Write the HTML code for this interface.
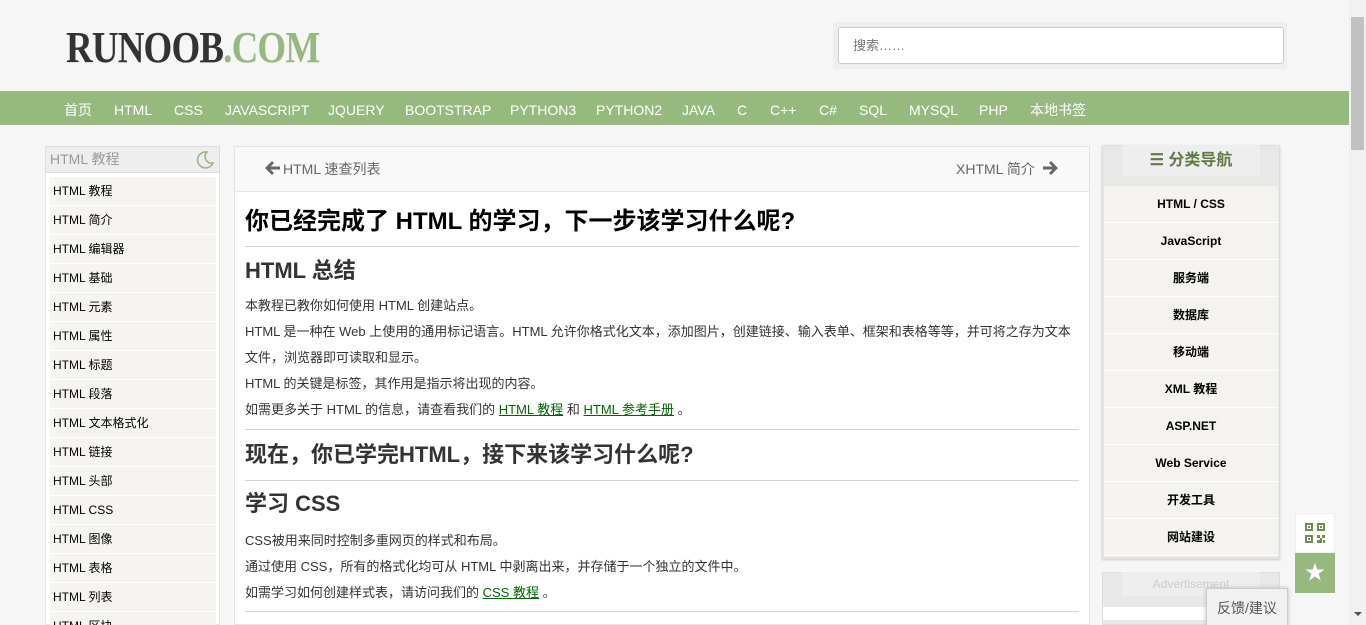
<!DOCTYPE html>
<html style="overflow:hidden;height:625px"><head><meta charset="utf-8"><style>
*{margin:0;padding:0;box-sizing:border-box}
body{width:1366px;height:625px;overflow:hidden;background:#f6f6f6;font-family:"Liberation Sans","Noto Sans CJK SC",sans-serif;position:relative;color:#333}
.a{position:absolute;white-space:nowrap}
.nav span{position:absolute;top:2px;line-height:34px;color:#fff;font-size:14px}
.li{position:absolute;left:50px;width:166px;height:29px;background:#f6f4f0;border-bottom:1px solid #fff;font-size:12px;line-height:28px;padding-left:3px;color:#000}
.ri{position:absolute;left:1104px;width:174px;height:37px;background:#f4f3f0;border-bottom:1px solid #fff;font-size:12px;font-weight:bold;line-height:36px;text-align:center;color:#000}
.p{position:absolute;left:245px;font-size:13px;line-height:26px;color:#333;white-space:nowrap}
.p a{color:#006600;text-decoration:underline}
.hr{position:absolute;left:245px;width:834px;height:1px;background:#d4d4d4}
</style></head><body>
<div class="a" style="left:66px;top:22px;font-family:'Liberation Serif',serif;font-weight:bold;font-size:44px;color:#333;transform:scaleX(0.84);transform-origin:left top;letter-spacing:-1px">RUNOOB<span style="color:#96b97d">.COM</span></div>
<div class="a" style="left:833px;top:22px;width:454px;height:47px;background:#eee;border-radius:3px"></div>
<div class="a" style="left:838px;top:27px;width:446px;height:37px;background:#fff;border:1px solid #ccc;border-radius:3px;font-size:13px;color:#777;line-height:35px;padding-left:14px">搜索……</div>
<div class="a nav" style="left:0;top:91px;width:1350px;height:34px;background:#96b97d">
<span style="left:64px">首页</span><span style="left:114px">HTML</span><span style="left:174px">CSS</span><span style="left:225px">JAVASCRIPT</span><span style="left:328px">JQUERY</span><span style="left:405px">BOOTSTRAP</span><span style="left:510px">PYTHON3</span><span style="left:596px">PYTHON2</span><span style="left:682px">JAVA</span><span style="left:737px">C</span><span style="left:770px">C++</span><span style="left:819px">C#</span><span style="left:859px">SQL</span><span style="left:909px">MYSQL</span><span style="left:979px">PHP</span><span style="left:1030px">本地书签</span></div>

<div class="a" style="left:45px;top:146px;width:175px;height:479px;background:#fff;border:1px solid #e5e5e5"></div>
<div class="a" style="left:45px;top:146px;width:175px;height:27px;background:#eee;border:1px solid #ddd;font-size:14px;color:#999;line-height:25px;padding-left:4px">HTML 教程</div>
<svg class="a" style="left:195px;top:150px" width="20" height="20" viewBox="0 0 20 20"><path d="M12 2A8 8 0 1 0 18 13A6.5 6.5 0 0 1 12 2Z" fill="none" stroke="#96b97d" stroke-width="1.6"/></svg>
<div class="li" style="top:177px">HTML 教程</div><div class="li" style="top:206px">HTML 简介</div><div class="li" style="top:235px">HTML 编辑器</div><div class="li" style="top:264px">HTML 基础</div><div class="li" style="top:293px">HTML 元素</div><div class="li" style="top:322px">HTML 属性</div><div class="li" style="top:351px">HTML 标题</div><div class="li" style="top:380px">HTML 段落</div><div class="li" style="top:409px">HTML 文本格式化</div><div class="li" style="top:438px">HTML 链接</div><div class="li" style="top:467px">HTML 头部</div><div class="li" style="top:496px">HTML CSS</div><div class="li" style="top:525px">HTML 图像</div><div class="li" style="top:554px">HTML 表格</div><div class="li" style="top:583px">HTML 列表</div><div class="li" style="top:612px">HTML 区块</div>

<div class="a" style="left:234px;top:146px;width:856px;height:479px;background:#fff;border:1px solid #e5e5e5"></div>
<div class="a" style="left:234px;top:146px;width:856px;height:46px;background:#f9f9f9;border:1px solid #e3e3e8"></div>
<svg class="a" style="left:265px;top:161px" width="15" height="14" viewBox="0 0 15 14"><path d="M7 0L0 7L7 14L9 12L5.5 8.5H15V5.5H5.5L9 2Z" fill="#666"/></svg>
<div class="a" style="left:283px;top:159px;font-size:14px;color:#666">HTML 速查列表</div>
<div class="a" style="left:956px;top:159px;font-size:14px;color:#666">XHTML 简介</div>
<svg class="a" style="left:1043px;top:161px" width="15" height="14" viewBox="0 0 15 14"><path d="M8 0L15 7L8 14L6 12L9.5 8.5H0V5.5H9.5L6 2Z" fill="#666"/></svg>

<div class="a" style="left:245px;top:201px;font-size:24px;font-weight:bold;color:#000">你已经完成了 HTML 的学习，下一步该学习什么呢?</div>
<div class="hr" style="top:246px"></div>
<div class="a" style="left:245px;top:258px;font-size:22px;font-weight:bold;color:#333;line-height:26px">HTML 总结</div>
<div class="p" style="top:293px">本教程已教你如何使用 HTML 创建站点。</div>
<div class="p" style="top:319px">HTML 是一种在 Web 上使用的通用标记语言。HTML 允许你格式化文本，添加图片，创建链接、输入表单、框架和表格等等，并可将之存为文本</div>
<div class="p" style="top:345px">文件，浏览器即可读取和显示。</div>
<div class="p" style="top:371px">HTML 的关键是标签，其作用是指示将出现的内容。</div>
<div class="p" style="top:397px">如需更多关于 HTML 的信息，请查看我们的 <a>HTML 教程</a> 和 <a>HTML 参考手册</a> 。</div>
<div class="hr" style="top:429px"></div>
<div class="a" style="left:245px;top:442px;font-size:22px;font-weight:bold;color:#333;line-height:26px">现在，你已学完HTML，接下来该学习什么呢?</div>
<div class="hr" style="top:480px"></div>
<div class="a" style="left:245px;top:491px;font-size:22px;font-weight:bold;color:#333;line-height:26px">学习 CSS</div>
<div class="p" style="top:528px">CSS被用来同时控制多重网页的样式和布局。</div>
<div class="p" style="top:554px">通过使用 CSS，所有的格式化均可从 HTML 中剥离出来，并存储于一个独立的文件中。</div>
<div class="p" style="top:580px">如需学习如何创建样式表，请访问我们的 <a>CSS 教程</a> 。</div>
<div class="hr" style="top:611px"></div>

<div class="a" style="left:1102px;top:145px;width:178px;height:414px;background:#e8e8e8;border:1px solid #ddd;box-shadow:0 1px 2px #ccc"></div>
<div class="a" style="left:1122px;top:145px;width:138px;height:31px;background:#eee;font-size:16px;font-weight:bold;color:#5f7a46;text-align:center;line-height:31px">☰ 分类导航</div>
<div class="ri" style="top:186px">HTML / CSS</div><div class="ri" style="top:223px">JavaScript</div><div class="ri" style="top:260px">服务端</div><div class="ri" style="top:297px">数据库</div><div class="ri" style="top:334px">移动端</div><div class="ri" style="top:371px">XML 教程</div><div class="ri" style="top:408px">ASP.NET</div><div class="ri" style="top:445px">Web Service</div><div class="ri" style="top:482px">开发工具</div><div class="ri" style="top:519px">网站建设</div>
<div class="a" style="left:1102px;top:572px;width:178px;height:53px;background:#e8e8e8;border:1px solid #ddd"></div>
<div class="a" style="left:1122px;top:572px;width:138px;height:24px;background:#eee;font-size:12px;color:#ccc;text-align:center;line-height:24px">Advertisement</div>
<div class="a" style="left:1103px;top:607px;width:176px;height:13px;background:#fff"></div>

<div class="a" style="left:1295px;top:513px;width:40px;height:40px;background:#fff;border:1px solid #eee"></div>
<svg class="a" style="left:1305px;top:523px" width="20" height="20" viewBox="0 0 20 20" fill="#6b8f4e"><path d="M0 0h8v8H0zM2 2v4h4V2zM12 0h8v8h-8zM14 2v4h4V2zM0 12h8v8H0zM2 14v4h4v-4zM3 3h2v2H3zM15 3h2v2h-2zM3 15h2v2H3zM12 12h3v3h-3zM17 12h3v3h-3zM12 17h3v3h-3zM15 15h2v5h-2zM18 17h2v3h-2z"/></svg>
<div class="a" style="left:1295px;top:553px;width:40px;height:40px;background:#96b97d;color:#fff;font-size:20px;text-align:center;line-height:40px">★</div>
<div class="a" style="left:1206px;top:588px;width:82px;height:40px;background:#f1f1f1;border:1px solid #ccc;box-shadow:0 0 4px #bbb;font-size:14px;color:#555;text-align:center;line-height:38px">反馈/建议</div>

<div class="a" style="left:1349px;top:0;width:17px;height:625px;background:#f1f1f1"></div>
<div class="a" style="left:1351px;top:17px;width:13px;height:133px;background:#c1c1c1"></div>
<div class="a" style="left:1354px;top:612px;width:0;height:0;border-left:4px solid transparent;border-right:4px solid transparent;border-top:4px solid #505050"></div>
</body></html>
